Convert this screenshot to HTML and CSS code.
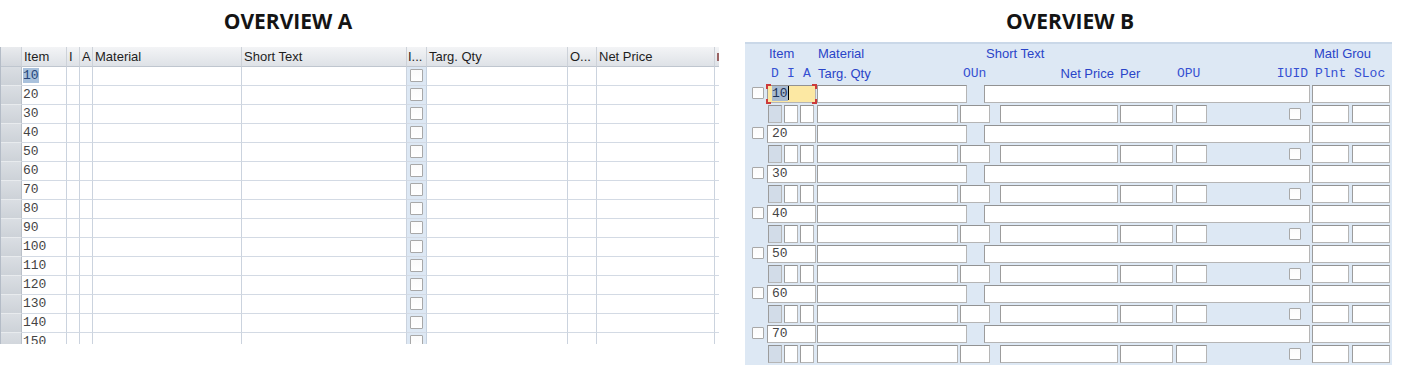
FILE: index.html
```html
<!DOCTYPE html>
<html>
<head>
<meta charset="utf-8">
<link rel="stylesheet" href="styles.css">
</head>
<body>
<div class="page">
  <section class="ov ov-a">
    <h2 class="title">OVERVIEW A</h2>
    <div class="grid">
      <div class="row head">
        <div class="cell c-rh"></div>
        <div class="cell c-item">Item</div>
        <div class="cell c-i">I</div>
        <div class="cell c-a">A</div>
        <div class="cell c-mat">Material</div>
        <div class="cell c-short">Short Text</div>
        <div class="cell c-chk">I...</div>
        <div class="cell c-targ">Targ. Qty</div>
        <div class="cell c-o">O...</div>
        <div class="cell c-net">Net Price</div>
        <div class="cell c-last"><span class="mark"></span></div>
      </div>
      <div class="row"><div class="cell c-rh"></div><div class="cell c-item"><span class="sel-a">10</span></div><div class="cell c-i"></div><div class="cell c-a"></div><div class="cell c-mat"></div><div class="cell c-short"></div><div class="cell c-chk"><span class="cbox"></span></div><div class="cell c-targ"></div><div class="cell c-o"></div><div class="cell c-net"></div><div class="cell c-last"></div></div>
      <div class="row"><div class="cell c-rh"></div><div class="cell c-item">20</div><div class="cell c-i"></div><div class="cell c-a"></div><div class="cell c-mat"></div><div class="cell c-short"></div><div class="cell c-chk"><span class="cbox"></span></div><div class="cell c-targ"></div><div class="cell c-o"></div><div class="cell c-net"></div><div class="cell c-last"></div></div>
      <div class="row"><div class="cell c-rh"></div><div class="cell c-item">30</div><div class="cell c-i"></div><div class="cell c-a"></div><div class="cell c-mat"></div><div class="cell c-short"></div><div class="cell c-chk"><span class="cbox"></span></div><div class="cell c-targ"></div><div class="cell c-o"></div><div class="cell c-net"></div><div class="cell c-last"></div></div>
      <div class="row"><div class="cell c-rh"></div><div class="cell c-item">40</div><div class="cell c-i"></div><div class="cell c-a"></div><div class="cell c-mat"></div><div class="cell c-short"></div><div class="cell c-chk"><span class="cbox"></span></div><div class="cell c-targ"></div><div class="cell c-o"></div><div class="cell c-net"></div><div class="cell c-last"></div></div>
      <div class="row"><div class="cell c-rh"></div><div class="cell c-item">50</div><div class="cell c-i"></div><div class="cell c-a"></div><div class="cell c-mat"></div><div class="cell c-short"></div><div class="cell c-chk"><span class="cbox"></span></div><div class="cell c-targ"></div><div class="cell c-o"></div><div class="cell c-net"></div><div class="cell c-last"></div></div>
      <div class="row"><div class="cell c-rh"></div><div class="cell c-item">60</div><div class="cell c-i"></div><div class="cell c-a"></div><div class="cell c-mat"></div><div class="cell c-short"></div><div class="cell c-chk"><span class="cbox"></span></div><div class="cell c-targ"></div><div class="cell c-o"></div><div class="cell c-net"></div><div class="cell c-last"></div></div>
      <div class="row"><div class="cell c-rh"></div><div class="cell c-item">70</div><div class="cell c-i"></div><div class="cell c-a"></div><div class="cell c-mat"></div><div class="cell c-short"></div><div class="cell c-chk"><span class="cbox"></span></div><div class="cell c-targ"></div><div class="cell c-o"></div><div class="cell c-net"></div><div class="cell c-last"></div></div>
      <div class="row"><div class="cell c-rh"></div><div class="cell c-item">80</div><div class="cell c-i"></div><div class="cell c-a"></div><div class="cell c-mat"></div><div class="cell c-short"></div><div class="cell c-chk"><span class="cbox"></span></div><div class="cell c-targ"></div><div class="cell c-o"></div><div class="cell c-net"></div><div class="cell c-last"></div></div>
      <div class="row"><div class="cell c-rh"></div><div class="cell c-item">90</div><div class="cell c-i"></div><div class="cell c-a"></div><div class="cell c-mat"></div><div class="cell c-short"></div><div class="cell c-chk"><span class="cbox"></span></div><div class="cell c-targ"></div><div class="cell c-o"></div><div class="cell c-net"></div><div class="cell c-last"></div></div>
      <div class="row"><div class="cell c-rh"></div><div class="cell c-item">100</div><div class="cell c-i"></div><div class="cell c-a"></div><div class="cell c-mat"></div><div class="cell c-short"></div><div class="cell c-chk"><span class="cbox"></span></div><div class="cell c-targ"></div><div class="cell c-o"></div><div class="cell c-net"></div><div class="cell c-last"></div></div>
      <div class="row"><div class="cell c-rh"></div><div class="cell c-item">110</div><div class="cell c-i"></div><div class="cell c-a"></div><div class="cell c-mat"></div><div class="cell c-short"></div><div class="cell c-chk"><span class="cbox"></span></div><div class="cell c-targ"></div><div class="cell c-o"></div><div class="cell c-net"></div><div class="cell c-last"></div></div>
      <div class="row"><div class="cell c-rh"></div><div class="cell c-item">120</div><div class="cell c-i"></div><div class="cell c-a"></div><div class="cell c-mat"></div><div class="cell c-short"></div><div class="cell c-chk"><span class="cbox"></span></div><div class="cell c-targ"></div><div class="cell c-o"></div><div class="cell c-net"></div><div class="cell c-last"></div></div>
      <div class="row"><div class="cell c-rh"></div><div class="cell c-item">130</div><div class="cell c-i"></div><div class="cell c-a"></div><div class="cell c-mat"></div><div class="cell c-short"></div><div class="cell c-chk"><span class="cbox"></span></div><div class="cell c-targ"></div><div class="cell c-o"></div><div class="cell c-net"></div><div class="cell c-last"></div></div>
      <div class="row"><div class="cell c-rh"></div><div class="cell c-item">140</div><div class="cell c-i"></div><div class="cell c-a"></div><div class="cell c-mat"></div><div class="cell c-short"></div><div class="cell c-chk"><span class="cbox"></span></div><div class="cell c-targ"></div><div class="cell c-o"></div><div class="cell c-net"></div><div class="cell c-last"></div></div>
      <div class="row"><div class="cell c-rh"></div><div class="cell c-item">150</div><div class="cell c-i"></div><div class="cell c-a"></div><div class="cell c-mat"></div><div class="cell c-short"></div><div class="cell c-chk"><span class="cbox"></span></div><div class="cell c-targ"></div><div class="cell c-o"></div><div class="cell c-net"></div><div class="cell c-last"></div></div>
    </div>
  </section>

  <section class="ov ov-b">
    <h2 class="title">OVERVIEW B</h2>
    <div class="panel">
      <div class="frow hrow">
        <span class="cb-sp"></span>
        <span class="lbl f-item p2">Item</span>
        <span class="lbl f-mat p1">Material</span>
        <span class="lbl f-short p2">Short Text</span>
        <span class="lbl f-mgrp p2">Matl Grou</span>
      </div>
      <div class="frow hrow">
        <span class="lbl mono f-d ctr">D</span>
        <span class="lbl mono f-i ctr">I</span>
        <span class="lbl mono f-a ctr">A</span>
        <span class="lbl f-targ p1">Targ. Qty</span>
        <span class="lbl mono f-oun p3">OUn</span>
        <span class="lbl f-net rgt">Net Price</span>
        <span class="lbl f-per">Per</span>
        <span class="lbl mono f-opu p1">OPU</span>
        <span class="lbl mono iuid rgt">IUID</span>
        <span class="lbl mono f-plnt p3">Plnt</span>
        <span class="lbl mono f-sloc p2">SLoc</span>
      </div>

      <div class="frow"><span class="cbox rb"></span><span class="fld f-item focus"><span class="sel-b">10</span><span class="caret"></span></span><span class="fld f-mat"></span><span class="fld f-short"></span><span class="fld f-mgrp"></span></div>
      <div class="frow"><span class="fld f-d dis"></span><span class="fld f-i"></span><span class="fld f-a"></span><span class="fld f-targ"></span><span class="fld f-oun"></span><span class="fld f-net"></span><span class="fld f-per"></span><span class="fld f-opu"></span><span class="iuid"><span class="cbox"></span></span><span class="fld f-plnt"></span><span class="fld f-sloc"></span></div>

      <div class="frow"><span class="cbox rb"></span><span class="fld f-item">20</span><span class="fld f-mat"></span><span class="fld f-short"></span><span class="fld f-mgrp"></span></div>
      <div class="frow"><span class="fld f-d dis"></span><span class="fld f-i"></span><span class="fld f-a"></span><span class="fld f-targ"></span><span class="fld f-oun"></span><span class="fld f-net"></span><span class="fld f-per"></span><span class="fld f-opu"></span><span class="iuid"><span class="cbox"></span></span><span class="fld f-plnt"></span><span class="fld f-sloc"></span></div>

      <div class="frow"><span class="cbox rb"></span><span class="fld f-item">30</span><span class="fld f-mat"></span><span class="fld f-short"></span><span class="fld f-mgrp"></span></div>
      <div class="frow"><span class="fld f-d dis"></span><span class="fld f-i"></span><span class="fld f-a"></span><span class="fld f-targ"></span><span class="fld f-oun"></span><span class="fld f-net"></span><span class="fld f-per"></span><span class="fld f-opu"></span><span class="iuid"><span class="cbox"></span></span><span class="fld f-plnt"></span><span class="fld f-sloc"></span></div>

      <div class="frow"><span class="cbox rb"></span><span class="fld f-item">40</span><span class="fld f-mat"></span><span class="fld f-short"></span><span class="fld f-mgrp"></span></div>
      <div class="frow"><span class="fld f-d dis"></span><span class="fld f-i"></span><span class="fld f-a"></span><span class="fld f-targ"></span><span class="fld f-oun"></span><span class="fld f-net"></span><span class="fld f-per"></span><span class="fld f-opu"></span><span class="iuid"><span class="cbox"></span></span><span class="fld f-plnt"></span><span class="fld f-sloc"></span></div>

      <div class="frow"><span class="cbox rb"></span><span class="fld f-item">50</span><span class="fld f-mat"></span><span class="fld f-short"></span><span class="fld f-mgrp"></span></div>
      <div class="frow"><span class="fld f-d dis"></span><span class="fld f-i"></span><span class="fld f-a"></span><span class="fld f-targ"></span><span class="fld f-oun"></span><span class="fld f-net"></span><span class="fld f-per"></span><span class="fld f-opu"></span><span class="iuid"><span class="cbox"></span></span><span class="fld f-plnt"></span><span class="fld f-sloc"></span></div>

      <div class="frow"><span class="cbox rb"></span><span class="fld f-item">60</span><span class="fld f-mat"></span><span class="fld f-short"></span><span class="fld f-mgrp"></span></div>
      <div class="frow"><span class="fld f-d dis"></span><span class="fld f-i"></span><span class="fld f-a"></span><span class="fld f-targ"></span><span class="fld f-oun"></span><span class="fld f-net"></span><span class="fld f-per"></span><span class="fld f-opu"></span><span class="iuid"><span class="cbox"></span></span><span class="fld f-plnt"></span><span class="fld f-sloc"></span></div>

      <div class="frow"><span class="cbox rb"></span><span class="fld f-item">70</span><span class="fld f-mat"></span><span class="fld f-short"></span><span class="fld f-mgrp"></span></div>
      <div class="frow"><span class="fld f-d dis"></span><span class="fld f-i"></span><span class="fld f-a"></span><span class="fld f-targ"></span><span class="fld f-oun"></span><span class="fld f-net"></span><span class="fld f-per"></span><span class="fld f-opu"></span><span class="iuid"><span class="cbox"></span></span><span class="fld f-plnt"></span><span class="fld f-sloc"></span></div>
    </div>
  </section>
</div>
</body>
</html>
```

FILE: styles.css
```css
* { box-sizing: border-box; }
html, body { margin: 0; padding: 0; }
body {
  width: 1402px;
  height: 371px;
  overflow: hidden;
  background: #ffffff;
  font-family: "Liberation Sans", Arial, sans-serif;
  font-size: 13px;
}
.page { display: flex; align-items: flex-start; }

.ov-a { width: 719px; flex: none; }
.ov-b { width: 647px; margin-left: 26px; flex: none; }

.title {
  margin: 0;
  height: 42px;
  font-family: "Open Sans", sans-serif;
  font-weight: 700;
  font-size: 21px;
  line-height: 42px;
  text-align: center;
  color: #141414;
}
.ov-a .title { width: 576px; }
.ov-b .title { padding-left: 3px; }

/* ---------- Overview A: table control ---------- */
.grid {
  margin-top: 5px;
  height: 297px;
  overflow: hidden;
  border-left: 1px solid #b4bcc7;
}
.row { display: flex; height: 19px; }
.cell {
  flex: none;
  height: 100%;
  overflow: hidden;
  white-space: nowrap;
  border-right: 1px solid #cbd3de;
  border-bottom: 1px solid #d3dae4;
  font-family: "Liberation Mono", "Courier New", monospace;
  font-size: 13px;
  line-height: 18px;
  color: #444444;
  padding-left: 1px;
}
.head { height: 20px; background: linear-gradient(#f3f4f6, #dde1e6); }
.head .cell {
  font-family: "Liberation Sans", Arial, sans-serif;
  font-size: 13px;
  line-height: 19px;
  color: #1e1e1e;
  padding-left: 2px;
  border-right-color: #cdd2d9;
  border-bottom-color: #bfc6cf;
}
.c-rh { width: 21px; background: linear-gradient(#dadee3, #cdd2d8); border-right-color: #b9c0c9; border-bottom-color: #e8ebee; }
.head .c-rh { background: linear-gradient(#e9ebee, #d3d7dd); }
.c-item { width: 45px; }
.c-i { width: 13px; }
.c-a { width: 13px; }
.c-mat { width: 149px; }
.c-short { width: 165px; }
.c-chk { width: 20px; background: #dde8f4; padding-left: 3px; border-right-color: #c5d1df; }
.head .c-chk { background: transparent; padding-left: 1px; }
.c-targ { width: 141px; }
.c-o { width: 29px; }
.c-net { width: 118px; }
.c-last { width: 20px; }
.mark { display: block; width: 2px; height: 8px; margin-top: 6px; background: #9a6464; }

.sel-a { background: #a9c1dc; color: #264679; }

.cbox {
  display: block;
  width: 13px;
  height: 13px;
  margin-top: 2px;
  background: linear-gradient(#fbfbfb, #ffffff);
  border: 1px solid #a8a8a8;
  border-radius: 1px;
  flex: none;
}

/* ---------- Overview B: step loop ---------- */
.panel {
  background: #dde8f4;
  border-top: 2px solid #cad8e8;
  height: 323px;
}
.frow { display: flex; align-items: flex-start; height: 20px; }
.hrow .lbl { line-height: 20px; height: 20px; }

.lbl {
  flex: none;
  color: #2a44c8;
  font-family: "Liberation Sans", Arial, sans-serif;
  font-size: 13px;
  white-space: nowrap;
  overflow: visible;
}
.lbl.mono { font-family: "Liberation Mono", "Courier New", monospace; font-size: 13px; color: #3550d2; }
.p1 { padding-left: 1px; }
.p2 { padding-left: 2px; }
.p3 { padding-left: 3px; }
.ctr { text-align: center; }
.rgt { text-align: right; padding-right: 4px; }

.fld {
  flex: none;
  height: 18px;
  margin-top: 1px;
  background: #ffffff;
  border: 1px solid #b5b5b5;
  border-top-color: #929292;
  border-left-color: #9c9c9c;
  font-family: "Liberation Mono", "Courier New", monospace;
  font-size: 13px;
  line-height: 16px;
  color: #444444;
  padding-left: 4px;
  white-space: nowrap;
}
.fld.dis { background: #d2dce8; }

.cb-sp { flex: none; width: 12px; margin-left: 7px; }
.cbox.rb { width: 12px; height: 12px; margin-left: 7px; margin-top: 3px; }

.f-item { width: 49px; margin-left: 3px; }
.f-mat { width: 150px; margin-left: 1px; }
.f-short { width: 326px; margin-left: 17px; }
.f-mgrp { width: 78px; margin-left: 2px; }

.f-d { width: 14px; margin-left: 23px; }
.f-i { width: 14px; margin-left: 2px; }
.f-a { width: 14px; margin-left: 2px; }
.f-targ { width: 141px; margin-left: 3px; }
.f-oun { width: 30px; margin-left: 2px; }
.f-net { width: 118px; margin-left: 10px; }
.f-per { width: 53px; margin-left: 2px; }
.f-opu { width: 31px; margin-left: 3px; }
.iuid { flex: none; width: 105px; height: 20px; display: flex; justify-content: flex-end; padding-right: 11px; }
.iuid .cbox { width: 12px; height: 12px; margin-top: 4px; }
.hrow .iuid { display: block; padding-right: 4px; }
.f-plnt { width: 37px; }
.f-sloc { width: 38px; margin-left: 3px; }

.focus { position: relative; background: #fce8a3; }
.focus::after {
  content: "";
  position: absolute;
  left: -2px; top: -2px; right: -2px; bottom: -2px;
  background:
    linear-gradient(#cc3b3b, #cc3b3b) left top / 5px 2px no-repeat,
    linear-gradient(#cc3b3b, #cc3b3b) left top / 2px 5px no-repeat,
    linear-gradient(#cc3b3b, #cc3b3b) right top / 5px 2px no-repeat,
    linear-gradient(#cc3b3b, #cc3b3b) right top / 2px 5px no-repeat,
    linear-gradient(#cc3b3b, #cc3b3b) left bottom / 5px 2px no-repeat,
    linear-gradient(#cc3b3b, #cc3b3b) left bottom / 2px 5px no-repeat,
    linear-gradient(#cc3b3b, #cc3b3b) right bottom / 5px 2px no-repeat,
    linear-gradient(#cc3b3b, #cc3b3b) right bottom / 2px 5px no-repeat;
}
.sel-b { background: #a8bad0; color: #1d3256; }
.caret { display: inline-block; width: 1px; height: 14px; background: #000; vertical-align: -3px; }
```
